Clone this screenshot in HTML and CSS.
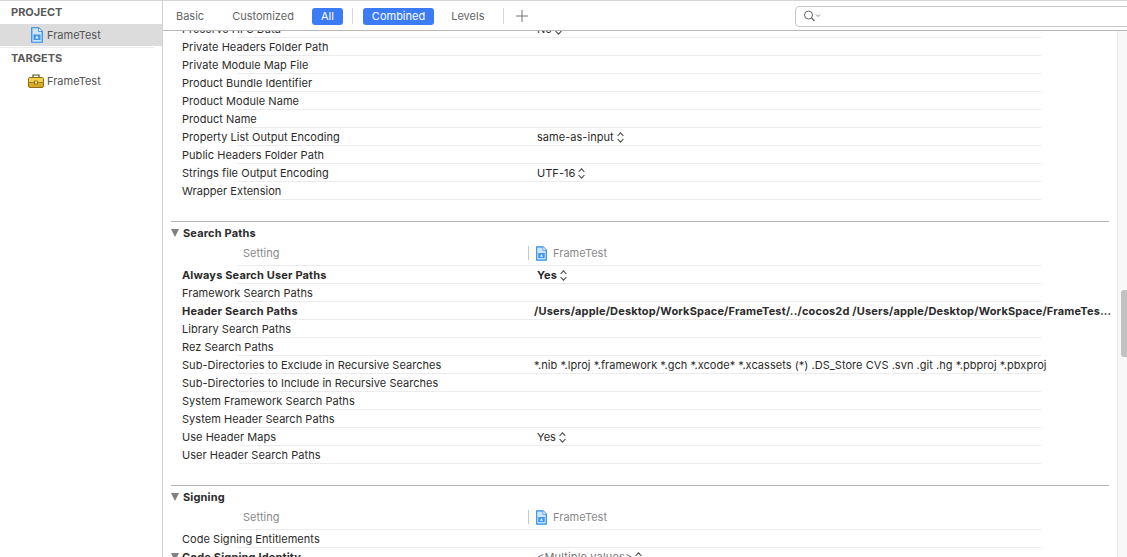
FILE: index.html
```html
<!DOCTYPE html>
<html lang="en">
<head>
    <meta charset="UTF-8">
    <title>FrameTest - Build Settings</title>
    <link rel="stylesheet" href="styles.css">
</head>
<body>
    <svg class="defs">
        <defs>
            <symbol id="file-icon" viewBox="0 0 12 16">
                <path d="M.75.75h7l3.500 3.500v11H.75z" fill="#cfe4fb" stroke="#2b8be6" stroke-width="1.200"/>
                <path d="M7.500.75v3.750h3.750" fill="#f2f8ff" stroke="#2b8be6" stroke-width=".8"/>
                <path d="M2.500 7.500h7v5.500h-7z" fill="#3b97ea"/>
                <path d="M6 8.500L4.200 11.500h3.600z" fill="#e6f2ff"/>
            </symbol>
            <symbol id="updown" viewBox="0 0 7 11">
                <path d="M.6 4L3.500.8 6.400 4M.6 7l2.900 3.200L6.400 7" fill="none" stroke="#484848" stroke-width="1.100"/>
            </symbol>
        </defs>
    </svg>
    <aside class="sidebar">
        <div class="side-head first">PROJECT</div>
        <div class="side-item selected">
            <svg class="side-icon"><use href="#file-icon"/></svg>
            <span>FrameTest</span>
        </div>
        <div class="side-rule"></div>
        <div class="side-head">TARGETS</div>
        <div class="side-item">
            <svg class="side-icon target" viewBox="0 0 16 14">
                <path d="M5 3.500V1h6v2.500" fill="none" stroke="#5f4a12" stroke-width="1.200"/>
                <rect x=".5" y="3.500" width="15" height="10" rx="1.500" fill="#dba726" stroke="#8f6f14"/>
                <rect x="1" y="4" width="14" height="4" fill="#f3cf4e"/>
                <path d="M1 8.500h14" stroke="#a07c1a"/>
                <rect x="6.500" y="7" width="3" height="3" fill="#f7e08c" stroke="#5f4a12" stroke-width=".6"/>
            </svg>
            <span>FrameTest</span>
        </div>
    </aside>
    <main class="main">
        <header class="toolbar">
            <span class="tab">Basic</span>
            <span class="tab near">Customized</span>
            <span class="tab pill">All</span>
            <span class="bar-sep"></span>
            <span class="tab pill">Combined</span>
            <span class="tab">Levels</span>
            <span class="bar-sep"></span>
            <svg class="plus" viewBox="0 0 12 12"><path d="M6 0v12M0 6h12" stroke="#777" stroke-width="1"/></svg>
            <div class="search">
                <svg class="search-icon" viewBox="0 0 18 12">
                    <circle cx="5.500" cy="5" r="4" fill="none" stroke="#666"/>
                    <path d="M8.500 8l3 3" stroke="#666" stroke-width="1.200"/>
                    <path d="M13 4.500l2 2 2-2" fill="none" stroke="#888"/>
                </svg>
            </div>
        </header>
        <div class="body">
            <div class="scroll">
                <section class="group clipped">
                    <div class="row"><span class="label">Preserve HFS Data</span><span class="value">No <svg class="updown"><use href="#updown"/></svg></span></div>
                    <div class="row"><span class="label">Private Headers Folder Path</span></div>
                    <div class="row"><span class="label">Private Module Map File</span></div>
                    <div class="row"><span class="label">Product Bundle Identifier</span></div>
                    <div class="row"><span class="label">Product Module Name</span></div>
                    <div class="row"><span class="label">Product Name</span></div>
                    <div class="row"><span class="label">Property List Output Encoding</span><span class="value">same-as-input <svg class="updown"><use href="#updown"/></svg></span></div>
                    <div class="row"><span class="label">Public Headers Folder Path</span></div>
                    <div class="row"><span class="label">Strings file Output Encoding</span><span class="value">UTF-16 <svg class="updown"><use href="#updown"/></svg></span></div>
                    <div class="row"><span class="label">Wrapper Extension</span></div>
                </section>

                <section class="group ruled">
                    <h2 class="group-title"><span class="triangle"></span>Search Paths</h2>
                    <div class="row head">
                        <span class="label">Setting</span>
                        <span class="value"><svg class="head-icon"><use href="#file-icon"/></svg>FrameTest</span>
                    </div>
                    <div class="row bold"><span class="label">Always Search User Paths</span><span class="value">Yes <svg class="updown"><use href="#updown"/></svg></span></div>
                    <div class="row"><span class="label">Framework Search Paths</span></div>
                    <div class="row bold"><span class="label">Header Search Paths</span><span class="value long">/Users/apple/Desktop/WorkSpace/FrameTest/../cocos2d /Users/apple/Desktop/WorkSpace/FrameTest/../cocos2d/external</span></div>
                    <div class="row"><span class="label">Library Search Paths</span></div>
                    <div class="row"><span class="label">Rez Search Paths</span></div>
                    <div class="row"><span class="label">Sub-Directories to Exclude in Recursive Searches</span><span class="value long">*.nib *.lproj *.framework *.gch *.xcode* *.xcassets (*) .DS_Store CVS .svn .git .hg *.pbproj *.pbxproj</span></div>
                    <div class="row"><span class="label">Sub-Directories to Include in Recursive Searches</span></div>
                    <div class="row"><span class="label">System Framework Search Paths</span></div>
                    <div class="row"><span class="label">System Header Search Paths</span></div>
                    <div class="row"><span class="label">Use Header Maps</span><span class="value">Yes <svg class="updown"><use href="#updown"/></svg></span></div>
                    <div class="row"><span class="label">User Header Search Paths</span></div>
                </section>

                <section class="group ruled">
                    <h2 class="group-title"><span class="triangle"></span>Signing</h2>
                    <div class="row head">
                        <span class="label">Setting</span>
                        <span class="value"><svg class="head-icon"><use href="#file-icon"/></svg>FrameTest</span>
                    </div>
                    <div class="row"><span class="label">Code Signing Entitlements</span></div>
                    <div class="row bold">
                        <span class="label"><span class="triangle small"></span>Code Signing Identity</span>
                        <span class="value muted">&lt;Multiple values&gt; <svg class="updown"><use href="#updown"/></svg></span>
                    </div>
                </section>
            </div>
            <div class="scrollbar"><div class="thumb"></div></div>
        </div>
    </main>
</body>
</html>
```

FILE: styles.css
```css
html,
body {
    height: 100%;
}

body {
    margin: 0;
    display: flex;
    overflow: hidden;
    font-family: Inter, "Liberation Sans", sans-serif;
    font-size: 11px;
    color: #2b2b2b;
    background-color: #ffffff;
}

.defs {
    width: 0;
    height: 0;
    flex: none;
}

/* sidebar */
.sidebar {
    width: 163px;
    flex: none;
    box-sizing: border-box;
    border-top: 1px solid #d4d4d4;
    border-right: 1px solid #d0d0d0;
}

.side-head {
    height: 21px;
    line-height: 21px;
    padding-left: 11px;
    font-weight: 700;
    color: #5a5a5a;
}

.side-head.first {
    height: 23px;
    line-height: 23px;
}

.side-item {
    height: 23px;
    display: flex;
    align-items: center;
    color: #555555;
}

.side-item.selected {
    height: 22px;
    background-color: #dcdcdc;
}

.side-icon {
    width: 12px;
    height: 16px;
    margin-left: 31px;
    margin-right: 4px;
}

.side-icon.target {
    width: 16px;
    height: 14px;
    margin-left: 28px;
    margin-right: 3px;
}

.side-rule {
    height: 1px;
    margin: 1px 8px 0 0;
    background-color: #ececec;
}

/* toolbar */
.main {
    flex: 1;
    min-width: 0;
    display: flex;
    flex-direction: column;
}

.toolbar {
    height: 31px;
    flex: none;
    box-sizing: border-box;
    display: flex;
    align-items: center;
    border-top: 1px solid #d4d4d4;
    border-bottom: 1px solid #b9b9b9;
    padding: 1px 0 0 13px;
    color: #666666;
}

.tab {
    margin-right: 28px;
}

.tab.near {
    margin-right: 18px;
}

.tab.pill {
    height: 17px;
    line-height: 17px;
    padding: 0 9px;
    margin-right: 9px;
    border-radius: 3px;
    color: #ffffff;
    background-color: #3b7cf6;
}

.tab.pill + .tab {
    margin-left: 8px;
    margin-right: 19px;
}

.bar-sep {
    width: 1px;
    height: 16px;
    margin-right: 10px;
    background-color: #d8d8d8;
}

.plus {
    width: 12px;
    height: 12px;
    margin-left: 2px;
}

.search {
    width: 340px;
    height: 21px;
    flex: none;
    margin-left: auto;
    margin-right: -8px;
    box-sizing: border-box;
    border: 1px solid #c6c6c6;
    border-radius: 4px;
    display: flex;
    align-items: center;
    padding-left: 7px;
}

.search-icon {
    width: 18px;
    height: 12px;
}

/* settings list */
.body {
    flex: 1;
    min-height: 0;
    display: flex;
}

.scroll {
    flex: 1;
    min-width: 0;
    overflow: hidden;
}

.group {
    margin: 0 8px;
    padding-bottom: 21px;
}

.group.clipped {
    margin-top: -11px;
}

.group.ruled {
    border-top: 1px solid #b5b5b5;
}

.group-title {
    height: 21px;
    margin: 0;
    display: flex;
    align-items: center;
    font-size: 11px;
    font-weight: 700;
    letter-spacing: 0.16px;
    color: #2b2b2b;
}

.triangle {
    width: 0;
    height: 0;
    margin-right: 4px;
    border-left: 4px solid transparent;
    border-right: 4px solid transparent;
    border-top: 8px solid #808080;
}

.triangle.small {
    margin-left: -11px;
    margin-right: 3px;
    display: inline-block;
}

.row {
    height: 18px;
    line-height: 19px;
    display: flex;
    white-space: nowrap;
    letter-spacing: 0.04px;
    /* separator starts past the label column and stops short of the list's right edge */
    background: linear-gradient(#ececec, #ececec) no-repeat 67px 100% / 803px 1px;
}

.label {
    width: 355px;
    flex: none;
    margin-left: 11px;
}

.value {
    display: flex;
    align-items: center;
    height: 19px;
    gap: 3px;
}

.value.long {
    width: 579px;
    flex: none;
    margin-left: -3px;
    display: block;
    overflow: hidden;
    text-overflow: ellipsis;
}

.value.muted {
    font-weight: 400;
    color: #777777;
}

.updown {
    width: 7px;
    height: 11px;
}

.row.bold {
    font-weight: 700;
    letter-spacing: 0.16px;
}

.row.head {
    height: 23px;
    line-height: 21px;
    color: #8a8a8a;
}

.row.head .label {
    margin-left: 72px;
    width: 285px;
}

.row.head .value {
    height: 14px;
    margin-top: 3px;
    padding-left: 7px;
    gap: 6px;
    border-left: 1px solid #c8c8c8;
}

.head-icon {
    width: 11px;
    height: 15px;
}

.scrollbar {
    width: 10px;
    flex: none;
    background-color: #f8f8f8;
    border-left: 1px solid #ececec;
    box-sizing: border-box;
}

.thumb {
    width: 6px;
    height: 67px;
    margin: 259px 0 0 3px;
    border-radius: 3px 0 0 3px;
    background-color: #c2c2c2;
}
```
